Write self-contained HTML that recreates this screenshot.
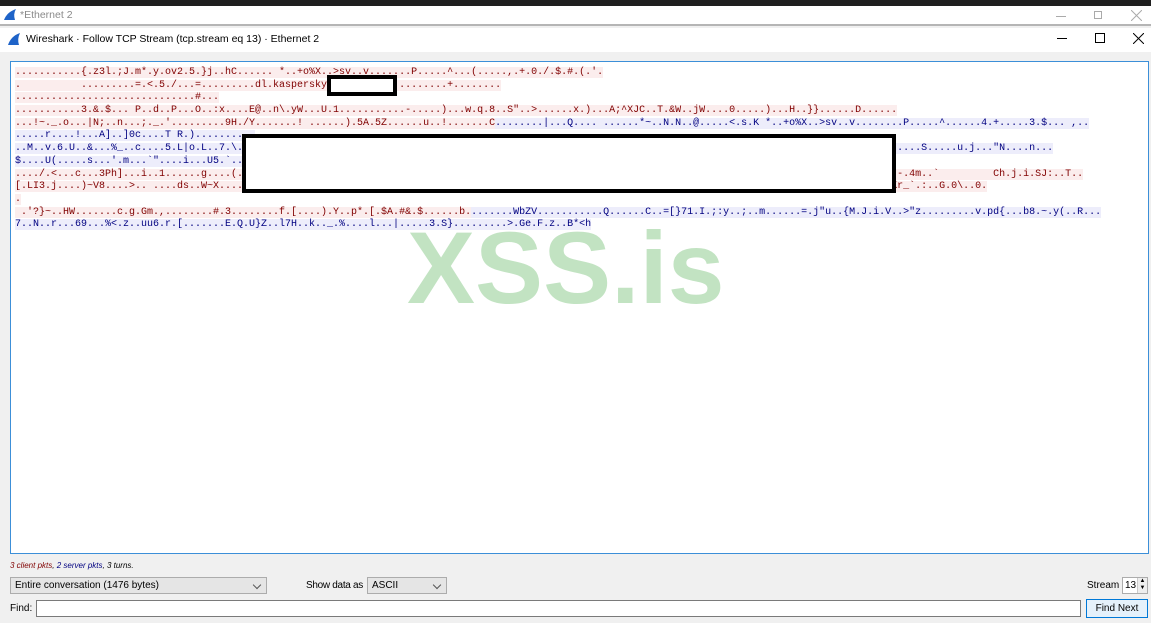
<!DOCTYPE html>
<html><head><meta charset="utf-8"><style>
*{margin:0;padding:0;box-sizing:border-box}
body{width:1151px;height:623px;overflow:hidden;background:#f0f0f0;font-family:"Liberation Sans",sans-serif;position:relative}
.abs{position:absolute}
#top{left:0;top:0;width:1151px;height:6px;background:#1f1f1f}
#t1{left:0;top:6px;width:1151px;height:20px;background:#fff;border-bottom:2px solid #b5b5b5}
#t2{left:0;top:28px;width:1151px;height:24px;background:#fff}
#ta{left:10px;top:61px;width:1139px;height:493px;background:#fff;border:1px solid #3c8fd8}
.rows{position:absolute;left:4px;top:5px;font-family:"Liberation Mono",monospace;font-size:10px;line-height:12.7px}
.rows span{white-space:pre}
.r{background:#fbeded;color:#800000}
.b{background:#ededfb;color:#000080}
.row{height:12.7px;white-space:nowrap}
.box{position:absolute;background:#fff;border:4px solid #000}
.wm{position:absolute;left:396px;top:148px;font:bold 102px "Liberation Sans",sans-serif;color:rgba(80,175,80,0.35)}
.sel{position:absolute;background:#e5e5e5;border:1px solid #acacac;font-size:10px;padding:2px 4px;height:17px}
.sel:after{content:"";position:absolute;right:6px;top:4px;width:5px;height:5px;border-right:1px solid #555;border-bottom:1px solid #555;transform:rotate(45deg)}
.lbl{position:absolute;font-size:10px;color:#000}
</style></head><body>
<div class="abs" id="top"></div>
<div class="abs" id="t1">
<svg class="abs" style="left:3px;top:3px" width="14" height="12"><path d="M1 11 Q4 3 13 0 Q10 5 12 11 Z" fill="#1e63c8"/></svg>
<div class="abs" style="left:20px;top:3px;font-size:10.5px;color:#8a8a8a">*Ethernet 2</div>
<div class="abs" style="left:1056px;top:10px;width:10px;height:1px;background:#aaa"></div>
<div class="abs" style="left:1094px;top:5px;width:8px;height:8px;border:1px solid #aaa"></div>
<svg class="abs" style="left:1131px;top:4px" width="11" height="11"><path d="M0 0L11 11M11 0L0 11" stroke="#aaa"/></svg>
</div>
<div class="abs" id="t2">
<svg class="abs" style="left:7px;top:5px" width="14" height="13"><path d="M1 12 Q4 3 13 0 Q10 6 12 12 Z" fill="#1e63c8"/></svg>
<div class="abs" style="left:26px;top:5px;font-size:10.5px;color:#000">Wireshark · Follow TCP Stream (tcp.stream eq 13) · Ethernet 2</div>
<div class="abs" style="left:1057px;top:10px;width:10px;height:1px;background:#000"></div>
<div class="abs" style="left:1095px;top:5px;width:10px;height:10px;border:1px solid #000"></div>
<svg class="abs" style="left:1133px;top:5px" width="11" height="11"><path d="M0 0L11 11M11 0L0 11" stroke="#000"/></svg>
</div>
<div class="abs" id="ta">
<div class="rows"><div class="row"><span class="r">...........{.z3l.;J.m*.y.ov2.5.}j..hC...... *..+o%X..&gt;sv..v.......P.....^...(.....,.+.0./.$.#.(.'.</span></div><div class="row"><span class="r">.          .........=.&lt;.5./...=.........dl.kaspersky           .........+........</span></div><div class="row"><span class="r">..............................#...</span></div><div class="row"><span class="r">...........3.&amp;.$... P..d..P...O..:x....E@..n\.yW...U.1...........-.....)...w.q.8..S"..&gt;......x.)...A;^XJC..T.&amp;W..jW....0.....)...H..}}......D......</span></div><div class="row"><span class="r">...!~._.o...|N;..n...;._.'.........9H./Y.......! ......).5A.5Z......u..!.......C</span><span class="b">........|...Q.... ......*~..N.N..@.....&lt;.s.K *..+o%X..&gt;sv..v........P.....^......4.+.....3.$... ,..</span></div><div class="row"><span class="b">.....r....!...A]..]0c....T R.)..........</span></div><div class="row"><span class="b">..M..v.6.U..&amp;...%_..c....5.L|o.L..7.\..........................................................................................................".Y.....S.....u.j..."N....n...</span></div><div class="row"><span class="b">$....U(.....s...'.m...`"....i...U5.`....</span></div><div class="row"><span class="r">..../.&lt;...c...3Ph]...i..1......g....(..........................................................................................................@9&lt;.-.4m..`         Ch.j.i.SJ:..T..</span></div><div class="row"><span class="r">[.LI3.j....)~V8....&gt;.. ....ds..W~X...............................................................................................................GKr_`.:..G.0\..0.</span></div><div class="row"><span class="r">.</span></div><div class="row"><span class="r"> .'?}~..HW.......c.g.Gm.,........#.3........f.[....).Y..p*.[.$A.#&amp;.$......b.</span><span class="b">.......WbZV...........Q......C..=[}71.I.;:y..;..m......=.j"u..{M.J.i.V..&gt;"z.........v.pd{...b8.~.y(..R...</span></div><div class="row"><span class="b">7..N..r...69...%&lt;.z..uu6.r.[.......E.Q.U}Z..l7H..k.._.%....l...|.....3.S}.........&gt;.Ge.F.z..B*&lt;h</span></div></div>
<div class="box" style="left:316px;top:13px;width:70px;height:21px"></div>
<div class="box" style="left:231px;top:72px;width:654px;height:59px"></div>
<div class="wm">XSS.is</div>
</div>
<div class="lbl" style="left:10px;top:561px;font-size:8px;font-style:italic"><span style="color:#800000">3 client pkts</span>, <span style="color:#000080">2 server pkts</span>, 3 turns.</div>
<div class="sel" style="left:10px;top:577px;width:257px">Entire conversation (1476 bytes)</div>
<div class="lbl" style="left:306px;top:580px;letter-spacing:-0.3px">Show data as</div>
<div class="sel" style="left:367px;top:577px;width:80px">ASCII</div>
<div class="lbl" style="left:1087px;top:580px">Stream</div>
<div class="abs" style="left:1122px;top:577px;width:26px;height:17px;background:#fff;border:1px solid #acacac;font-size:10px;padding:2px 2px">13</div>
<div class="abs" style="left:1137px;top:578px;width:10px;height:15px;background:#eee;border-left:1px solid #ccc;font-size:6px;line-height:7px;text-align:center">▲<br>▼</div>
<div class="lbl" style="left:10px;top:603px">Find:</div>
<div class="abs" style="left:36px;top:600px;width:1045px;height:17px;background:#fff;border:1px solid #7a7a7a"></div>
<div class="abs" style="left:1086px;top:599px;width:62px;height:19px;background:#e5f1fb;border:1px solid #0078d7;font-size:10px;text-align:center;line-height:17px">Find Next</div>
</body></html>
